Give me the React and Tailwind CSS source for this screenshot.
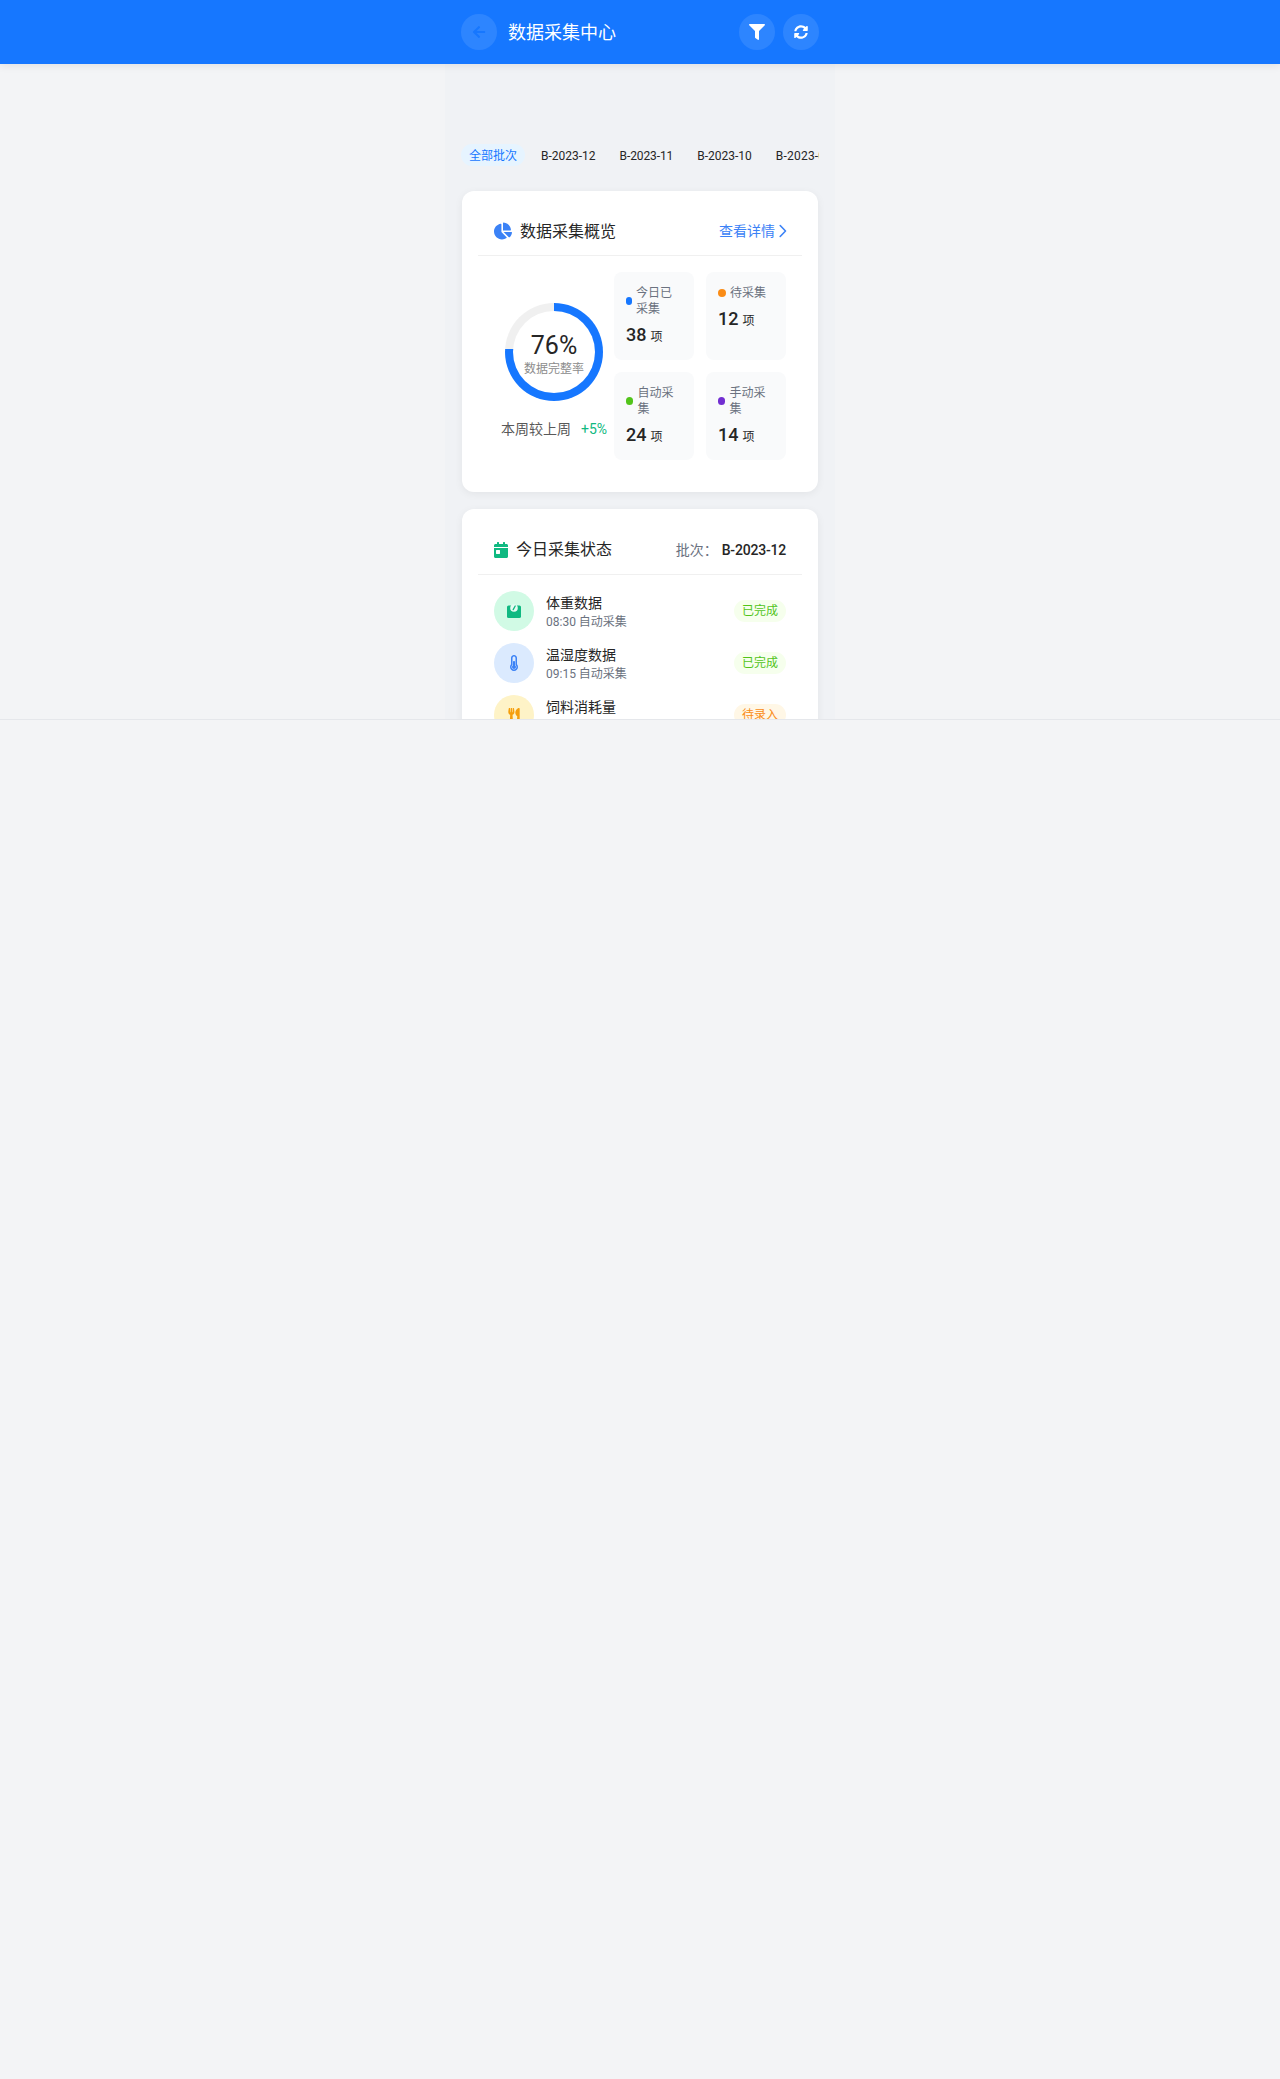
import React from 'react';
import { FaArrowLeft, FaFilter, FaSyncAlt, FaChartPie, FaCalendarDay, FaThermometerHalf, FaUtensils } from 'react-icons/fa';

function ScaleIcon() {
  return (
    <svg viewBox="0 0 14 14" className="w-3.5 h-3.5">
      <rect x="0" y="1.5" width="14" height="12.5" rx="1.6" fill="#10b981" />
      <circle cx="7" cy="4" r="3.8" fill="#e8fbf3" />
      <path d="M6.2 5.6 L8.2 2" stroke="#10b981" strokeWidth="1.3" strokeLinecap="round" fill="none" />
    </svg>
  );
}

function Stat({ dot, label, value }) {
  return (
    <div className="bg-[#f9fafb] rounded-lg px-3 pt-[13px] pb-3 h-[88px]">
      <div className="flex items-center text-xs leading-4 text-[#6b7280]">
        <span className={`w-2 h-2 rounded-full mr-1 ${dot}`}></span>
        <span>{label}</span>
      </div>
      <div className="mt-1 text-[#262626] leading-7">
        <span className="text-lg font-medium">{value}</span>
        <span className="text-xs ml-1">项</span>
      </div>
    </div>
  );
}

function Row({ bg, icon, title, sub, badge, badgeCls }) {
  return (
    <div className="flex items-center justify-between">
      <div className="flex items-center">
        <div className={`w-10 h-10 rounded-full flex items-center justify-center ${bg}`}>{icon}</div>
        <div className="ml-3 pt-0.5">
          <div className="text-sm leading-5 text-[#262626]">{title}</div>
          <div className="text-xs leading-[18px] text-[#6b7280]">{sub}</div>
        </div>
      </div>
      <span className={`text-xs leading-[18px] px-2 py-0.5 rounded-full ${badgeCls}`}>{badge}</span>
    </div>
  );
}

export default function App() {
  return (
    <div className="min-h-screen bg-[#f3f4f6] font-['Roboto','Noto_Sans_CJK_SC',sans-serif]">
      <header className="relative z-10 bg-[#1677ff] h-16 shadow-[0_2px_8px_rgba(0,0,0,0.08)]">
        <div className="w-[390px] mx-auto h-full px-4 flex items-center justify-between">
          <div className="flex items-center">
            <button className="w-9 h-9 rounded-full bg-white/10 flex items-center justify-center text-[#1677ff] text-sm">
              <FaArrowLeft />
            </button>
            <h1 className="ml-[11px] pt-0.5 text-lg text-white">数据采集中心</h1>
          </div>
          <div className="flex items-center gap-2">
            <button className="w-9 h-9 rounded-full bg-white/10 flex items-center justify-center text-white text-base">
              <FaFilter />
            </button>
            <button className="w-9 h-9 rounded-full bg-white/10 flex items-center justify-center text-white text-sm">
              <FaSyncAlt />
            </button>
          </div>
        </div>
      </header>

      <main className="w-[390px] mx-auto h-[655px] overflow-hidden bg-[#f0f2f5] px-4 pt-20">
        <div className="flex items-center gap-2 overflow-hidden mb-[25px] text-xs leading-[18px] whitespace-nowrap">
          <span className="px-2 pt-[3px] pb-px rounded-full bg-[#e6f4ff] text-[#1677ff]">全部批次</span>
          <span className="px-2 pt-[3px] pb-px text-[#262626]">B-2023-12</span>
          <span className="px-2 pt-[3px] pb-px text-[#262626] tracking-[-0.1px]">B-2023-11</span>
          <span className="px-2 pt-[3px] pb-px text-[#262626]">B-2023-10</span>
          <span className="px-2 pt-[3px] pb-px text-[#262626] tracking-[0.2px]">B-2023-09</span>
        </div>

        <section className="mx-px bg-white rounded-xl shadow-[0_2px_8px_rgba(0,0,0,0.06)] p-4 mb-[17px]">
          <div className="flex items-center justify-between px-4 py-3 border-b border-[#f0f0f0]">
            <div className="flex items-center text-base leading-6 text-[#262626]">
              <FaChartPie className="text-[#3b82f6] text-lg mr-2" />
              <span className="h-6 leading-[25px]">数据采集概览</span>
            </div>
            <div className="flex items-center text-sm text-[#3b82f6]">
              <span>查看详情</span>
              <svg viewBox="0 0 8 14" className="ml-1 -mr-px w-2 h-3.5" fill="none" stroke="currentColor" strokeWidth="1.6" strokeLinecap="round" strokeLinejoin="round">
                <path d="M1.2 1.5 L6.5 7 L1.2 12.5" />
              </svg>
            </div>
          </div>
          <div className="flex p-4">
            <div className="w-[120px] flex flex-col items-center pt-[31px]">
              <div className="w-[98px] h-[98px] rounded-full flex items-center justify-center bg-[conic-gradient(#1677ff_0_76%,#f0f0f0_76%_100%)]">
                <div className="w-[82px] h-[82px] pt-[5px] rounded-full bg-white flex flex-col items-center justify-center">
                  <div className="text-[25px] leading-7 text-[#262626]">76%</div>
                  <div className="mt-px text-xs leading-4 text-[#8c8c8c]">数据完整率</div>
                </div>
              </div>
              <div className="mt-[18px] flex items-center justify-center whitespace-nowrap text-sm leading-5 text-[#595959]">
                <span>本周较上周</span>
                <span className="ml-2.5 text-[#10b981]">+5%</span>
              </div>
            </div>
            <div className="grid grid-cols-2 gap-3 w-[172px]">
              <Stat dot="bg-[#1677ff]" label="今日已采集" value="38" />
              <Stat dot="bg-[#fa8c16]" label="待采集" value="12" />
              <Stat dot="bg-[#52c41a]" label="自动采集" value="24" />
              <Stat dot="bg-[#722ed1]" label="手动采集" value="14" />
            </div>
          </div>
        </section>

        <section className="mx-px bg-white rounded-xl shadow-[0_2px_8px_rgba(0,0,0,0.06)] p-4">
          <div className="flex items-center justify-between px-4 pt-[13px] pb-3 border-b border-[#f0f0f0]">
            <div className="flex items-center text-base leading-6 text-[#262626]">
              <FaCalendarDay className="text-[#10b981] w-3.5 h-4 mr-2" />
              <span>今日采集状态</span>
            </div>
            <div className="flex items-center text-sm">
              <span className="text-[#6b7280]">批次：</span>
              <span className="ml-1 font-medium text-[#262626] tracking-[-0.2px]">B-2023-12</span>
            </div>
          </div>
          <div className="flex flex-col gap-3 px-4 pt-4">
            <Row bg="bg-[#d1fae5]" icon={<ScaleIcon />} title="体重数据" sub="08:30 自动采集" badge="已完成" badgeCls="bg-[#f6ffed] text-[#52c41a]" />
            <Row bg="bg-[#dbeafe]" icon={<FaThermometerHalf className="text-[#3b82f6] text-base" />} title="温湿度数据" sub="09:15 自动采集" badge="已完成" badgeCls="bg-[#f6ffed] text-[#52c41a]" />
            <Row bg="bg-[#fef3c7]" icon={<FaUtensils className="text-[#f59e0b] text-sm" />} title="饲料消耗量" sub="10:00 手动采集" badge="待录入" badgeCls="bg-[#fff7e6] text-[#fa8c16]" />
          </div>
        </section>
      </main>
      <div className="border-t border-[#e5e7eb] h-px"></div>
    </div>
  );
}
